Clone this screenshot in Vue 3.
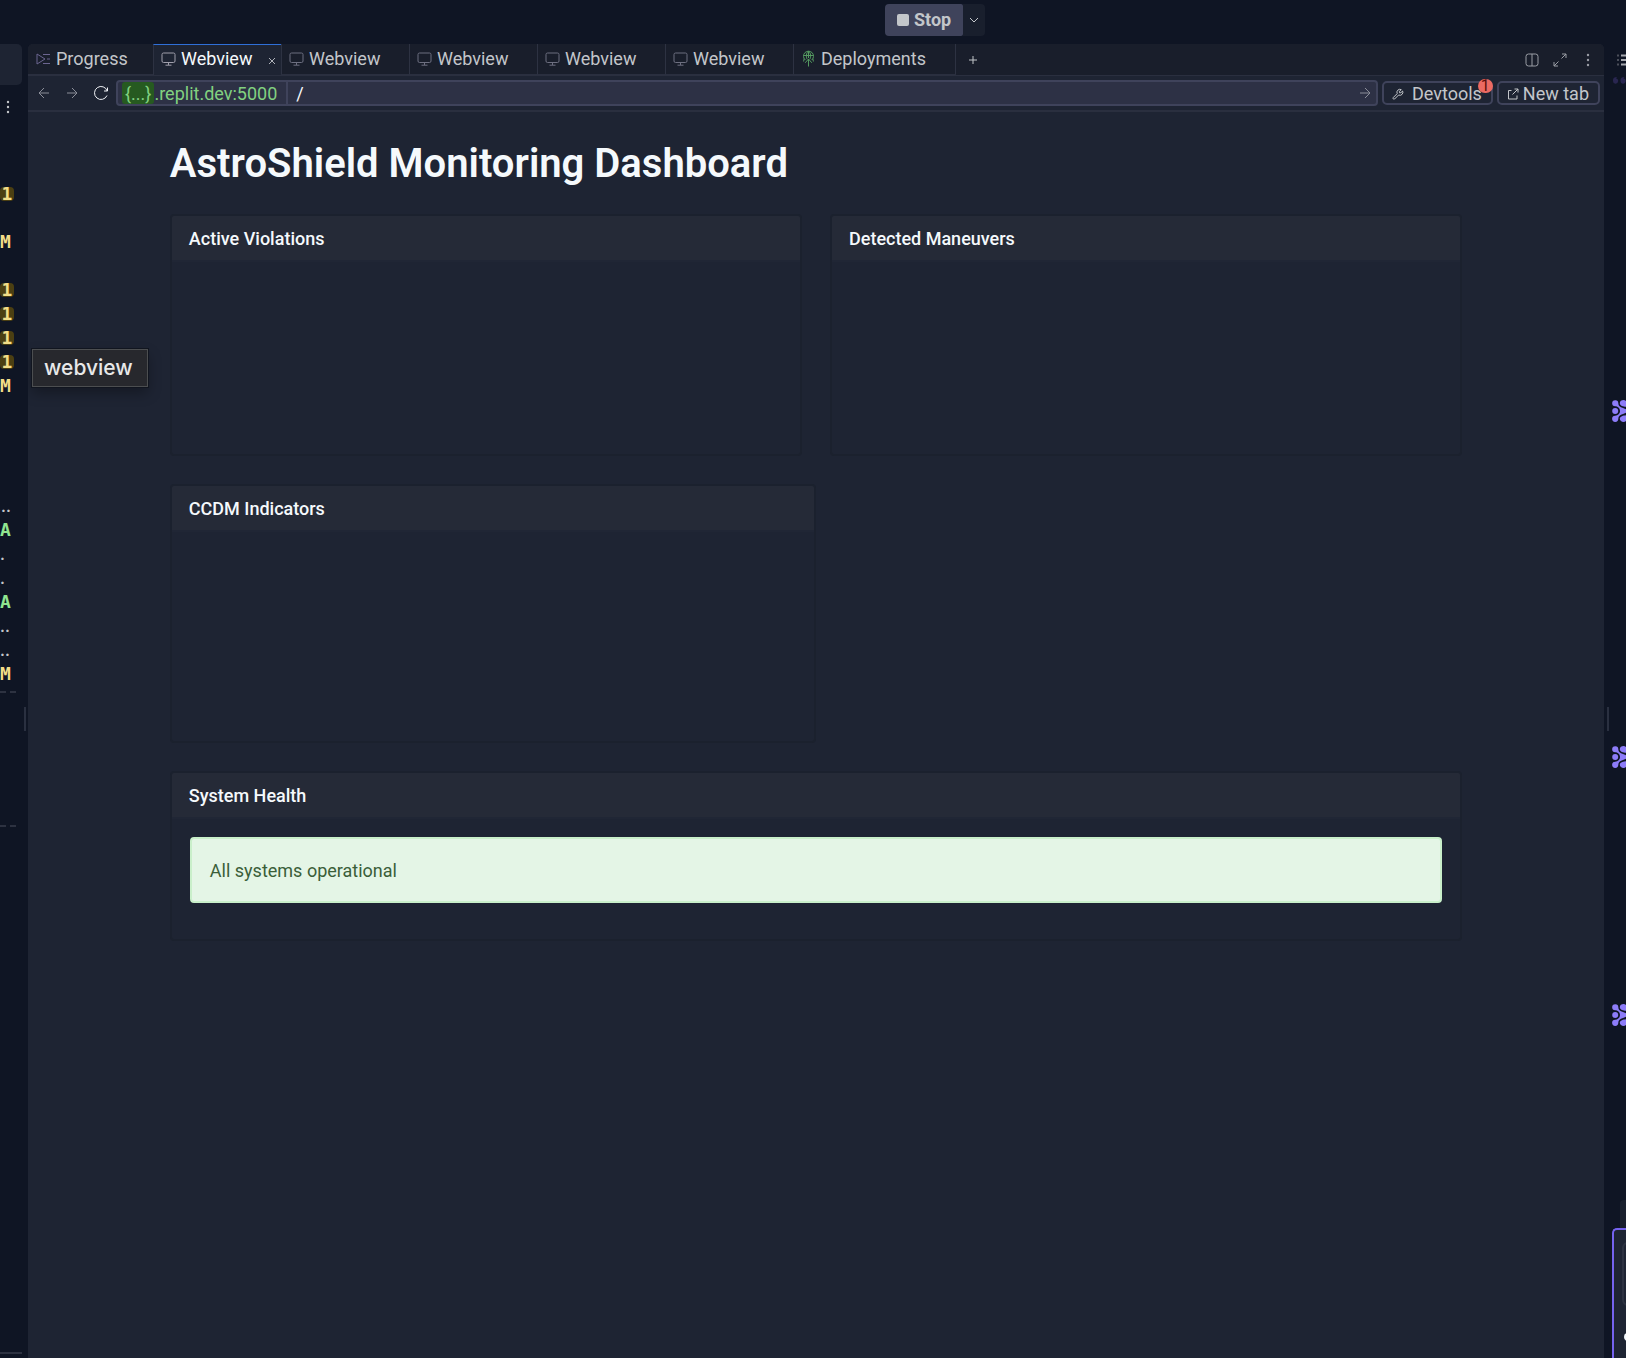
<script setup>
import { ref } from 'vue'

const path = ref('/')

const tabs = [
  { label: 'Progress', icon: 'progress', kind: 'first' },
  { label: 'Webview', icon: 'monitor', kind: 'active' },
  { label: 'Webview', icon: 'monitor', kind: 'idle' },
  { label: 'Webview', icon: 'monitor', kind: 'idle' },
  { label: 'Webview', icon: 'monitor', kind: 'idle' },
  { label: 'Webview', icon: 'monitor', kind: 'idle' },
  { label: 'Deployments', icon: 'deploy', kind: 'wide' },
]

// Git status column of the file tree; blank entries are unchanged files
const statuses = [
  '1', '', 'M', '', '1', '1', '1', '1', 'M', '', '', '', '', '...',
  'A', '.', '.', 'A', '..', '..', 'M',
]
const statusClass = { 1: 'count', M: 'modified', A: 'added', '...': 'dots long' }

// Heights of the agent messages in the clipped chat panel
const messages = [346, 258, 196]
</script>

<template>
  <div class="app">
    <header class="topbar">
      <button class="stop" type="button"><span class="square"></span>Stop</button>
      <button class="stop-more" type="button" aria-label="Run options">
        <svg width="10" height="6" viewBox="0 0 10 6"><path d="M1 1l4 4 4-4" /></svg>
      </button>
    </header>

    <div class="workspace">
      <aside class="files">
        <div class="files-tab"></div>
        <button class="kebab" type="button" aria-label="Files menu">
          <svg width="4" height="14" viewBox="0 0 4 14"><circle cx="2" cy="2" r="1.2" /><circle cx="2" cy="7" r="1.2" /><circle cx="2" cy="12" r="1.2" /></svg>
        </button>
        <ul class="statuses">
          <li v-for="(s, i) in statuses" :key="i"><span :class="statusClass[s] || 'dots'">{{ s }}</span></li>
        </ul>
        <div class="section"></div>
        <div class="section last"></div>
        <div class="files-foot"></div>
      </aside>
      <div class="gutter"><i></i></div>

      <main class="pane">
        <nav class="tabs">
          <div v-for="(t, i) in tabs" :key="i" class="tab" :class="t.kind">
            <button class="tab-label" type="button">
              <svg v-if="t.icon === 'progress'" class="t-icon prog" width="15" height="14" viewBox="0 0 15 14"><path d="M1 2v10l8-5zM7 2.500h7M11 7h3M7 11.500h7" /></svg>
              <svg v-else-if="t.icon === 'monitor'" class="t-icon" width="15" height="14" viewBox="0 0 15 14"><rect x="1" y="1" width="13" height="9.500" rx="1.500" /><path d="M7.500 10.500v2.500M4.500 13.200h6" /></svg>
              <svg v-else class="t-icon deploy" width="15" height="17" viewBox="0 0 15 17"><path d="M4.300 10A5 5 0 1 1 10.700 10M2.700 5.500h9.600M7.500 1v7M7.500 1C5 3 5 7 6 9M7.500 1c2.500 2 2.500 6 1.500 8M7.500 9v7.500M4.200 12.800L7.500 9l3.300 3.800M3.200 8.500l-.6 3M11.800 8.500l.6 3" /></svg>
              <span>{{ t.label }}</span>
            </button>
            <button v-if="t.kind === 'active'" class="close" type="button" aria-label="Close tab">
              <svg width="8" height="8" viewBox="0 0 8 8"><path d="M1 1l6 6M7 1l-6 6" /></svg>
            </button>
          </div>
          <button class="add" type="button" aria-label="New tab">
            <svg width="10" height="10" viewBox="0 0 10 10"><path d="M5 1v8M1 5h8" /></svg>
          </button>
          <div class="pane-tools">
            <button type="button" aria-label="Split pane"><svg width="14" height="14" viewBox="0 0 14 14"><rect x="1" y="1" width="12" height="12" rx="2.500" /><path d="M7 1v12" /></svg></button>
            <button type="button" aria-label="Maximize"><svg width="14" height="14" viewBox="0 0 14 14"><path d="M9 1h4v4M13 1L8.500 5.500M5 13H1V9M1 13l4.500-4.500" /></svg></button>
            <button type="button" aria-label="Pane menu"><svg class="fill" width="14" height="14" viewBox="0 0 14 14"><circle cx="7" cy="2" r="1.200" /><circle cx="7" cy="7" r="1.200" /><circle cx="7" cy="12" r="1.200" /></svg></button>
          </div>
        </nav>

        <div class="toolbar">
          <div class="history">
            <button type="button" aria-label="Back"><svg width="12" height="12" viewBox="0 0 12 12"><path d="M11 6H1M6 1L1 6l5 5" /></svg></button>
            <button type="button" aria-label="Forward"><svg width="12" height="12" viewBox="0 0 12 12"><path d="M1 6h10M6 1l5 5-5 5" /></svg></button>
            <button class="reload" type="button" aria-label="Reload"><svg width="16" height="16" viewBox="0 0 16 16"><path d="M14.500 2.500V6H11M14.200 6A6.500 6.500 0 1 0 14 10.500" /></svg></button>
          </div>
          <div class="url">
            <label class="host" for="path"><span class="pill">{...}</span>.replit.dev:5000</label>
            <input id="path" v-model="path" type="text" />
            <button type="button" aria-label="Go"><svg width="12" height="12" viewBox="0 0 12 12"><path d="M1 6h10M6 1l5 5-5 5" /></svg></button>
          </div>
          <button class="tool devtools" type="button">
            <svg width="12" height="12" viewBox="0 0 12 12"><path d="M1.200 9.600l4-4a3 3 0 0 1 4-4L7.500 3.300v1.400h1.400l1.700-1.700a3 3 0 0 1-4 4l-4 4a1 1 0 0 1-1.400-1.400z" /></svg>
            Devtools<span class="badge">1</span>
          </button>
          <button class="tool newtab" type="button">
            <svg width="12" height="12" viewBox="0 0 12 12"><path d="M4.500 2.500H1.500v8.500h8.500V7.500M7.500 1H11v3.500M11 1L5.500 6.500" /></svg>
            New tab
          </button>
        </div>

        <div class="page">
          <div class="dashboard">
            <h1>AstroShield Monitoring Dashboard</h1>
            <div class="pair">
              <section class="card"><h2>Active Violations</h2><div class="body"></div></section>
              <section class="card"><h2>Detected Maneuvers</h2><div class="body"></div></section>
            </div>
            <section class="card half"><h2>CCDM Indicators</h2><div class="body tall"></div></section>
            <section class="card">
              <h2>System Health</h2>
              <div class="health"><p class="alert" role="status">All systems operational</p></div>
            </section>
          </div>
          <div class="tooltip" role="tooltip">webview</div>
        </div>
      </main>

      <div class="gutter right"><i></i></div>
      <aside class="chat">
        <svg class="list" width="14" height="12" viewBox="0 0 14 12"><path class="dim" d="M5 1.500h2M5 6h2M5 10.500h2" /><path d="M9 1.500h5M9 6h5M9 10.500h5" /></svg>
        <svg class="quote" width="14" height="8" viewBox="0 0 14 8"><path d="M1 4Q1 1 5 1L4 2.500A2.600 2.600 0 1 1 1 5zM8.500 4q0-3 4-3l-1 1.500A2.600 2.600 0 1 1 8.500 5z" /></svg>
        <div class="messages">
          <div v-for="(h, i) in messages" :key="i" :style="{ height: h + 'px' }">
            <svg class="agent" width="14" height="22" viewBox="0 0 14 22">
              <path d="M3.200.2A3 3 0 0 1 6.300 3.200C6.300 5.800 8 7 11 8l3 1.200v3.600L11 14c-3 1-4.700 2.200-4.700 4.800A3.100 3.100 0 1 1 3.200 15.700C6 15.700 8 13.500 8 11S6 6.300 3.200 6.300a3 3 0 0 1 0-6.100z" />
              <circle cx="3.200" cy="11" r="3" />
              <path d="M14 1v5.800C11.500 6.500 7.800 5.800 7.800 3.200 7.800.2 12-.8 14 1zM14 21v-5.800c-2.500.3-6.200 1-6.200 3.600 0 3 4.200 4 6.200 2.200z" />
            </svg>
          </div>
        </div>
        <div class="chip"></div>
        <div class="composer"><div class="composer-input"></div><div class="dot"></div></div>
      </aside>
    </div>
  </div>
</template>

<style>
body { margin: 0; background: #0f1524; }
</style>

<style scoped>
* { box-sizing: border-box; }
.app {
  display: flex; flex-direction: column; min-height: 100vh; overflow: hidden;
  background: #0f1524; color: #c3c6ca; font: 18px/24px Roboto, "Noto Sans", sans-serif;
}
button { display: flex; align-items: center; margin: 0; padding: 0; border: 0; background: none; color: inherit; font: inherit; }
svg { display: block; flex: none; fill: none; stroke: currentColor; stroke-width: 1; }

.topbar { display: flex; height: 44px; padding: 4px 0 8px calc(50% + 72px); }
.stop { gap: 5px; padding: 0 12px; border-radius: 4px 2px 2px 4px; background: #3f435b; font-weight: 700; }
.square { width: 12px; height: 12px; border-radius: 2px; background: #c3c6ca; }
.stop-more { justify-content: center; width: 22px; border-radius: 0 4px 4px 0; background: #191f2d; }

.workspace { display: flex; flex: 1; }

.files { display: flex; flex-direction: column; width: 22px; overflow: hidden; }
.files-tab { height: 41px; border-radius: 0 5px 5px 0; background: #1e2433; }
.kebab { margin: 15px 0 0 6px; }
.kebab svg, .fill { fill: currentColor; stroke: none; }
.statuses { margin: 68px 0 0; padding: 0; list-style: none; font: bold 18px/24px "DejaVu Sans Mono", monospace; }
.statuses li { display: flex; align-items: center; width: 14px; height: 24px; }
.statuses .count { width: 14px; height: 14px; border-radius: 4px; background: #4b3f12; color: #f2dd88; line-height: 14px; text-align: center; }
.modified { color: #f2dd88; }
.added { color: #90e590; }
.dots { color: #c3c6ca; font: 500 18px/24px Roboto, sans-serif; }
.dots.long { margin-left: -4px; }
.section { height: 134px; margin-top: 5px; border-top: 2px dashed #2d3241; margin-right: 6px; }
.section.last { margin-top: 0; }
.files-foot { height: 2px; margin: auto 0 4px; background: #2d3241; }

.gutter { display: flex; align-items: center; justify-content: center; width: 6px; padding-top: 36px; }
.gutter.right { width: 8px; }
.gutter i { width: 2px; height: 24px; background: #2a3040; }

.pane { display: flex; flex-direction: column; flex: 1; min-width: 0; border-radius: 5px 5px 0 0; background: #1e2433; overflow: hidden; }
.tabs { display: flex; height: 32px; border-bottom: 1px solid #2a2f3f; background: #191e2b; }
.tab { display: flex; align-items: center; width: 128px; padding: 0 5px 1px 7px; border-left: 1px solid #2d3242; border-bottom: 1px solid #2a2f3f; }
.tab-label { gap: 5px; }
.tab.first { width: 125px; padding-left: 8px; border-left: 0; }
.tab.wide { width: 163px; border-right: 1px solid #2d3242; }
.tab.active { justify-content: space-between; padding-bottom: 3px; border-top: 1px solid #2f6fd8; border-bottom: 0; background: #1e2433; color: #f5f9fc; }
.t-icon { color: #6d6f80; }
.active .t-icon { color: #a09fac; }
.prog { color: #6b6590; }
.deploy { color: #559a61; }
.close { margin-top: 4px; color: #b0b3ba; }
.add { width: 34px; justify-content: center; }
.pane-tools { display: flex; gap: 14px; margin-left: auto; padding-right: 9px; color: #9a9da5; }

.toolbar { display: flex; align-items: center; gap: 4px; height: 36px; padding: 0 4px 0 8px; border-bottom: 2px solid #2a2f3f; }
.history { display: flex; width: 76px; justify-content: space-between; padding: 0 3px 0 2px; color: #8b8e99; }
.history .reload { width: 16px; color: #eef1f5; stroke-width: 2; }
.url { display: flex; align-items: center; flex: 1; min-width: 0; height: 26px; padding: 0 5px 0 4px; border: 2px solid #3f435b; border-radius: 4px; background: #2d3145; color: #8b8e99; }
.host { display: flex; height: 22px; padding-right: 9px; border-right: 2px solid #3f435b; color: #82d180; line-height: 24px; }
.pill { padding: 0 3px; border-radius: 3px; background: #265a20; }
#path { flex: 1; min-width: 0; height: 22px; padding: 1px 8px 0; border: 0; outline: 0; background: none; color: #f5f9fc; font: inherit; }
.tool { position: relative; height: 24px; border: 2px solid #3f435b; border-radius: 5px; white-space: nowrap; }
.devtools { gap: 8px; padding: 1px 9px 0 8px; }
.newtab { gap: 4px; padding: 1px 9px 0 8px; }
.badge { position: absolute; top: -4px; right: -2px; width: 15px; height: 14px; border-radius: 7px; background: #ec6a62; color: #5c0f0c; font-size: 16px; line-height: 14px; text-align: center; }

.page { position: relative; flex: 1; }
.dashboard { display: flex; flex-direction: column; gap: 28px; width: 82%; margin: 0 auto; padding-top: 28px; }
h1 { margin: 0 0 -2px; color: #f5f9fc; font-size: 40px; font-weight: 600; line-height: 48px; }
.pair { display: grid; grid-template-columns: 1fr 1fr; gap: 28px; }
.card { border: 2px solid #1b212e; border-radius: 4px; overflow: hidden; }
.half { width: 50%; }
h2 { height: 46px; margin: 0; padding: 0 17px; border-bottom: 2px solid #202635; background: #252a37; color: #f5f9fc; font-size: 18px; font-weight: 500; line-height: 46px; }
.body { height: 192px; }
.tall { height: 209px; }
.health { padding: 18px 18px 36px; }
.alert { margin: 0; padding: 20px 18px 18px; border: 2px solid #c9efca; border-radius: 4px; background: #e4f5e6; color: #3a5e39; }
.tooltip { position: absolute; top: 237px; left: 4px; padding: 6px 14px 6px 11px; border: 1px solid #4c4e50; outline: 1px solid #11151f; background: #27282d; box-shadow: 0 6px 14px #00000050; color: #e8e8e9; font: 500 21px/24px Inter, sans-serif; }

.chat { display: flex; flex-direction: column; width: 14px; overflow: hidden; }
.list { margin-top: 10px; color: #a5a7ad; stroke-width: 2; }
.dim { opacity: .4; }
.quote { margin-top: 10px; fill: #292650; stroke: none; }
.messages { margin-top: 316px; }
.agent { fill: #8d7cf8; stroke: none; }
.chip { height: 28px; margin-left: 8px; border-radius: 4px 0 0; background: #1a202e; }
.composer { flex: 1; padding: 12px 0 0 8px; border: 2px solid #7562ee; border-width: 2px 0 0 2px; border-radius: 5px 0 0; background: #1e2433; }
.composer-input { width: 40px; height: 64px; border: 2px solid #2d3241; border-radius: 6px; }
.dot { width: 8px; height: 8px; margin: 27px 0 0 2px; border-radius: 4px; background: #f5f9fc; }
</style>
